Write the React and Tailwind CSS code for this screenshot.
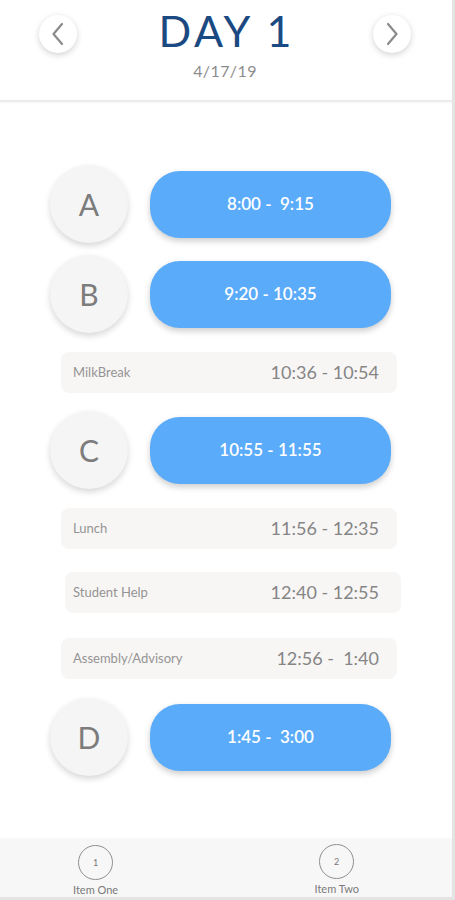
import React from 'react';

const font = { fontFamily: 'Lato, "Open Sans", sans-serif' };

const schedule = [
  { type: 'period', letter: 'A', time: '8:00 -  9:15', mt: 'mt-[63px]' },
  { type: 'period', letter: 'B', time: '9:20 - 10:35', mt: 'mt-[12px]' },
  { type: 'break', label: 'MilkBreak', time: '10:36 - 10:54', mt: 'mt-[19px]', box: 'ml-[61px] pl-[12px] pr-[18px]' },
  { type: 'period', letter: 'C', time: '10:55 - 11:55', mt: 'mt-[18px]' },
  { type: 'break', label: 'Lunch', time: '11:56 - 12:35', mt: 'mt-[19px]', box: 'ml-[61px] pl-[12px] pr-[18px]' },
  { type: 'break', label: 'Student Help', time: '12:40 - 12:55', mt: 'mt-[23px]', box: 'ml-[65px] pl-[8px] pr-[22px]' },
  { type: 'break', label: 'Assembly/Advisory', time: '12:56 -  1:40', mt: 'mt-[25px]', box: 'ml-[61px] pl-[12px] pr-[18px]' },
  { type: 'period', letter: 'D', time: '1:45 -  3:00', mt: 'mt-[19px]' },
];

function Chevron({ dir }) {
  return (
    <svg width="14" height="24" viewBox="0 0 14 24" fill="none">
      <path
        d={dir === 'left' ? 'M11 2 L2.5 12 L11 22' : 'M3 2 L11.5 12 L3 22'}
        stroke="#8a8a8a"
        strokeWidth="2.2"
        strokeLinecap="round"
        strokeLinejoin="round"
      />
    </svg>
  );
}

function NavButton({ dir }) {
  return (
    <button className="w-[38px] h-[38px] rounded-full bg-white flex items-center justify-center shadow-[0_2px_6px_rgba(0,0,0,0.18)]">
      <Chevron dir={dir} />
    </button>
  );
}

function PeriodRow({ item }) {
  return (
    <div className={`${item.mt} flex items-center h-[78px] pl-[50px]`}>
      <div className="w-[78px] h-[78px] rounded-full bg-[#f5f5f5] flex items-center justify-center shadow-[0_3px_6px_rgba(0,0,0,0.16)]">
        <span className="text-[30px] font-normal text-[#7c7c7c]">{item.letter}</span>
      </div>
      <div className="ml-[22px] w-[241px] h-[67px] rounded-[30px] bg-[#5aabfa] flex items-center justify-center shadow-[0_3px_6px_rgba(0,0,0,0.2)]">
        <span className="text-[17px] font-semibold text-white whitespace-pre">{item.time}</span>
      </div>
    </div>
  );
}

function BreakRow({ item }) {
  return (
    <div className={`${item.mt} ${item.box} w-[336px] h-[41px] rounded-lg bg-[#f8f6f5] flex items-center justify-between`}>
      <span className="text-[13px] text-[#949494]">{item.label}</span>
      <span className="text-[18px] text-[#858585] whitespace-pre">{item.time}</span>
    </div>
  );
}

function TabItem({ num, label }) {
  return (
    <div className="flex flex-col items-center">
      <div className="w-[35px] h-[35px] rounded-full border border-[#8f8f8f] flex items-center justify-center">
        <span className="text-[9px] text-[#777]">{num}</span>
      </div>
      <span className="text-[11px] leading-[12px] mt-[4px] text-[#7a7a7a]">{label}</span>
    </div>
  );
}

export default function App() {
  return (
    <div style={font} className="w-[455px] h-[900px] bg-white flex flex-col border-r-[3px] border-b-[3px] border-[#e4e4e4] overflow-hidden">
      <header className="h-[102px] shrink-0 flex items-start justify-between pl-[39px] pr-[41px] pt-[15px] border-b-[2px] border-[#ececec] shadow-[0_1px_2px_rgba(0,0,0,0.04)]">
        <NavButton dir="left" />
        <div className="flex flex-col items-center -mt-[10px]">
          <h1 className="text-[43px] leading-[52px] tracking-[0.08em] text-[#1b4a82] font-normal pl-[0.08em]">DAY 1</h1>
          <p className="text-[16px] leading-[20px] mt-[4px] text-[#8c8c8c] tracking-wide">4/17/19</p>
        </div>
        <NavButton dir="right" />
      </header>

      <main className="flex-1 flex flex-col">
        {schedule.map((item, i) =>
          item.type === 'period' ? <PeriodRow key={i} item={item} /> : <BreakRow key={i} item={item} />
        )}
      </main>

      <nav className="h-[59px] shrink-0 bg-[#f7f7f7] flex items-start pt-[7px]">
        <div className="ml-[73px]">
          <TabItem num="1" label="Item One" />
        </div>
        <div className="ml-auto mr-[93px] -mt-[1px]">
          <TabItem num="2" label="Item Two" />
        </div>
      </nav>
    </div>
  );
}
